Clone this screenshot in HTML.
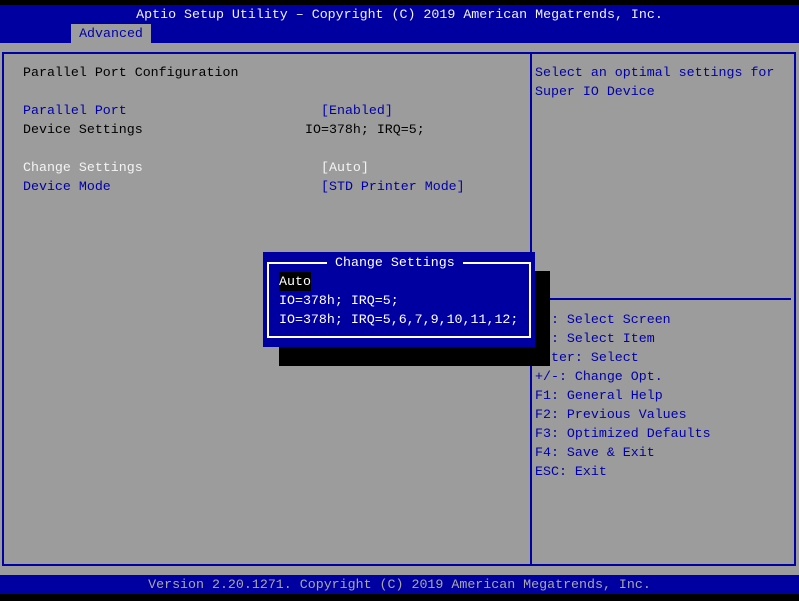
<!DOCTYPE html>
<html><head><meta charset="utf-8"><style>
*{margin:0;padding:0;box-sizing:border-box}
body{width:799px;height:601px;background:#000;position:relative;overflow:hidden;font-family:"Liberation Mono","DejaVu Sans Mono",monospace;font-size:13.3px;line-height:19px}
div{position:absolute;white-space:pre}
.b{color:#0000a8}.k{color:#000}.w{color:#fff}
</style></head><body>
<div style="left:0;top:5px;width:799px;height:38px;background:#0000a0"></div>
<div class="w" style="left:0;top:5px;width:799px;text-align:center;color:#f0f0f0">Aptio Setup Utility – Copyright (C) 2019 American Megatrends, Inc.</div>
<div style="left:71px;top:24px;width:80px;height:19px;background:#9c9c9c;color:#0000a8;text-align:center">Advanced</div>
<div style="left:0;top:43px;width:799px;height:532px;background:#9c9c9c"></div>
<div style="left:2px;top:52px;width:794px;height:514px;border:2px solid #0000a8"></div>
<div style="left:530px;top:52px;width:2px;height:514px;background:#0000a8"></div>
<div style="left:532px;top:298px;width:259px;height:2px;background:#0000a8"></div>
<div class="k" style="left:23px;top:63px">Parallel Port Configuration</div>
<div class="b" style="left:23px;top:101px">Parallel Port</div>
<div class="b" style="left:321px;top:101px">[Enabled]</div>
<div class="k" style="left:23px;top:120px">Device Settings</div>
<div class="k" style="left:305px;top:120px">IO=378h; IRQ=5;</div>
<div class="k" style="left:23px;top:158px;color:#f4f4f4">Change Settings</div>
<div class="k" style="left:321px;top:158px;color:#f4f4f4">[Auto]</div>
<div class="b" style="left:23px;top:177px">Device Mode</div>
<div class="b" style="left:321px;top:177px">[STD Printer Mode]</div>
<div class="b" style="left:535px;top:63px">Select an optimal settings for
Super IO Device</div>
<div class="b" style="left:535px;top:310px">  : Select Screen
  : Select Item
Enter: Select
+/-: Change Opt.
F1: General Help
F2: Previous Values
F3: Optimized Defaults
F4: Save &amp; Exit
ESC: Exit</div>
<div style="left:279px;top:271px;width:271px;height:95px;background:#000"></div>
<div style="left:263px;top:252px;width:272px;height:95px;background:#0000a0"></div>
<div style="left:267px;top:262px;width:264px;height:76px;border:2px solid #fff"></div>
<div class="w" style="left:327px;top:253px;background:#0000a0;padding:0 8px">Change Settings</div>
<div class="w" style="left:279px;top:272px;background:#000">Auto</div>
<div class="w" style="left:279px;top:291px">IO=378h; IRQ=5;</div>
<div class="w" style="left:279px;top:310px">IO=378h; IRQ=5,6,7,9,10,11,12;</div>
<div style="left:0;top:575px;width:799px;height:19px;background:#0000a0"></div>
<div style="left:0;top:575px;width:799px;text-align:center;color:#a8a8a8">Version 2.20.1271. Copyright (C) 2019 American Megatrends, Inc.</div>
</body></html>
